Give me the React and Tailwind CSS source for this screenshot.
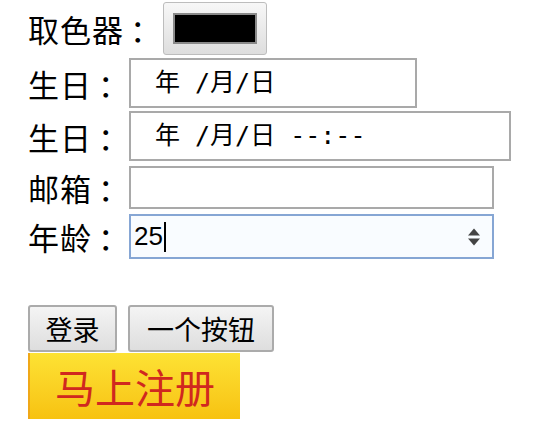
function Label({ text, width }) {
  return (
    <span className={`flex shrink-0 items-center whitespace-nowrap text-[31px] leading-none tracking-[1px] ${width}`}>
      <span>{text}</span>
      <span className="ml-[6px]">：</span>
    </span>
  );
}

export default function App() {
  const font = { fontFamily: '"Noto Sans CJK SC", "Noto Sans", sans-serif' };
  return (
    <div className="w-[542px] h-[431px] bg-white text-black pl-[28px] pt-[2px]" style={font}>
      {/* 取色器 */}
      <div className="flex items-center h-[53px]">
        <Label text="取色器" width="w-[135px]" />
        <div className="w-[104px] h-[53px] border border-[#bdbdbd] rounded-[3px] bg-gradient-to-b from-[#f7f7f7] to-[#dedede] flex items-center justify-center">
          <div className="w-[84px] h-[31px] bg-black border-2 border-[#8a8a8a]" />
        </div>
      </div>

      {/* 生日 date */}
      <div className="flex items-center h-[50px] mt-[3px]">
        <Label text="生日" width="w-[101px]" />
        <div className="w-[288px] h-[50px] border-2 border-[#a9a9a9] flex items-center pl-[24px] text-[25px] whitespace-pre font-['DejaVu_Sans_Mono','Noto_Sans_CJK_SC',monospace]">
          年 /月/日
        </div>
      </div>

      {/* 生日 datetime */}
      <div className="flex items-center h-[50px] mt-[3px]">
        <Label text="生日" width="w-[101px]" />
        <div className="w-[382px] h-[50px] border-2 border-[#a9a9a9] flex items-center pl-[24px] text-[25px] whitespace-pre font-['DejaVu_Sans_Mono','Noto_Sans_CJK_SC',monospace]">
          年 /月/日 --:--
        </div>
      </div>

      {/* 邮箱 */}
      <div className="flex items-center h-[43px] mt-[5px]">
        <Label text="邮箱" width="w-[101px]" />
        <div className="w-[365px] h-[43px] border-2 border-[#a9a9a9]" />
      </div>

      {/* 年龄 */}
      <div className="flex items-center h-[45px] mt-[5px]">
        <Label text="年龄" width="w-[101px]" />
        <div className="relative w-[365px] h-[45px] border-2 border-[#86a6d4] bg-[#f9fcff] flex items-center pl-[3px] text-[26px] font-['Liberation_Sans',sans-serif]">
          <span>25</span>
          <span className="w-[2px] h-[30px] bg-black ml-[1px]" />
          <div className="absolute right-[12px] top-1/2 -translate-y-1/2 flex flex-col items-center gap-[3px]">
            <div className="w-0 h-0 border-l-[6px] border-r-[6px] border-b-[7px] border-l-transparent border-r-transparent border-b-[#444]" />
            <div className="w-0 h-0 border-l-[6px] border-r-[6px] border-t-[7px] border-l-transparent border-r-transparent border-t-[#444]" />
          </div>
        </div>
      </div>

      {/* buttons */}
      <div className="flex items-center gap-[11px] mt-[46px]">
        <button className="w-[89px] h-[47px] border-2 border-[#ababab] rounded-[3px] bg-gradient-to-b from-[#f4f4f4] to-[#dedede] text-[27px] leading-none">
          登录
        </button>
        <button className="w-[146px] h-[47px] border-2 border-[#ababab] rounded-[3px] bg-gradient-to-b from-[#f4f4f4] to-[#dedede] text-[27px] leading-none">
          一个按钮
        </button>
      </div>

      {/* 马上注册 */}
      <div className="w-[212px] h-[66px] mt-[1px] bg-gradient-to-b from-[#fde233] to-[#f7c20f] border-l-2 border-[#f0a818] flex items-center justify-center">
        <span className="text-[40px] leading-none text-[#d0281f]">马上注册</span>
      </div>
    </div>
  );
}
